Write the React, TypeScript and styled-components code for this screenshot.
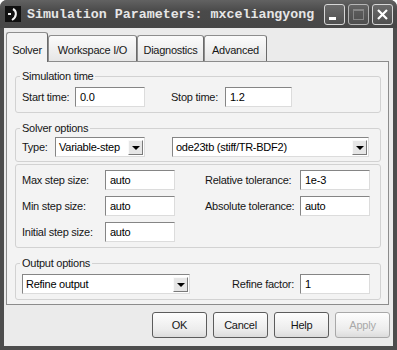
import * as React from "react"
import styled, { createGlobalStyle } from "styled-components"

const Global = createGlobalStyle`
    html, body { margin: 0; padding: 0; background: #ffffff; }
    body { font-family: "Liberation Sans", Arial, sans-serif; font-size: 11px; letter-spacing: -0.25px; color: #161616; }
`

// ---- Janela ----
const Window = styled.div`
    width: 397px; height: 350px; box-sizing: border-box;
    display: flex; flex-direction: column;
    background: #4d4d4d;
    border-radius: 7px 7px 0 0;
    overflow: hidden;
`
const TitleBar = styled.div`
    height: 28px; flex-shrink: 0;
    display: flex; align-items: center; gap: 6px;
    padding: 0 4px 0 5px;
    background: linear-gradient(#626262, #4a4a4a 40%, #474747);
`
const TitleText = styled.div`
    flex: 1;
    font-family: "Liberation Mono", "Courier New", monospace;
    font-weight: bold; font-size: 13.3px; letter-spacing: 0;
    color: #e6e6e6; white-space: nowrap;
`
const CaptionButtons = styled.div` display: flex; gap: 3px; `
const CaptionBtn = styled.div<{ $dim?: boolean }>`
    width: 21px; height: 21px; box-sizing: border-box;
    border: 1px solid #d6d6d6; border-radius: 3px;
    background: linear-gradient(#6a6a6a, #505050);
    display: flex; align-items: center; justify-content: center;
    opacity: ${p => p.$dim ? 0.75 : 1};
`

const Client = styled.div`
    flex: 1; margin: 0 4px 4px;
    background: #ebebeb;
    padding: 0 4px 4px 2px;
    display: flex; flex-direction: column;
`

// ---- Abas ----
const TabStrip = styled.div`
    height: 33px; display: flex; align-items: flex-end;
    position: relative; z-index: 1;
`
const Tab = styled.div<{ $active?: boolean; $w: number }>`
    width: ${p => p.$w}px; box-sizing: border-box;
    height: ${p => p.$active ? 30 : 26}px;
    margin-bottom: ${p => p.$active ? -1 : 0}px;
    padding-top: ${p => p.$active ? 11 : 8}px;
    border: 1px solid #8e8e8e; border-bottom: none;
    border-right-color: #6a6a6a;
    border-radius: 3px 3px 0 0;
    background: ${p => p.$active ? "#f3f3f3" : "linear-gradient(#fbfbfb, #e6e6e6)"};
    text-align: center; line-height: 13px; white-space: nowrap;
`
const Panel = styled.div`
    border: 1px solid #8c8c8c;
    background: #f3f3f3;
    padding: 8px 7px 4px 8px;
    display: flex; flex-direction: column;
`

// ---- Grupos ----
const Group = styled.fieldset<{ $top?: number }>`
    margin: ${p => p.$top || 0}px 0 0 0;
    min-width: 0;
    border: 1px solid #d2d2d2; border-radius: 3px;
    padding: ${p => p.$top === 2 ? 5 : 4}px 6px 5px 6px;
    display: flex; flex-direction: column; gap: 6px;
    &.tight { padding-top: 2px; padding-bottom: 4px; }
    & > legend { padding: 0 2px; margin-left: -2px; line-height: 13px; }
`
const Row = styled.div<{ $cols: string }>`
    display: grid; grid-template-columns: ${p => p.$cols};
    align-items: center; height: 20px;
`
const Label = styled.span<{ $right?: boolean }>`
    white-space: nowrap;
    text-align: ${p => p.$right ? "right" : "left"};
    padding-right: ${p => p.$right ? 6 : 0}px;
`
const Edit = styled.div`
    height: 20px; box-sizing: border-box;
    border: 1px solid; border-color: #858585 #dcdcdc #dcdcdc #858585;
    background: #fff;
    padding: 0 4px; line-height: 18px; white-space: nowrap; color: #000;
`
const Combo = styled.div`
    height: 20px; box-sizing: border-box;
    border: 1px solid; border-color: #858585 #dcdcdc #dcdcdc #858585;
    background: #fff;
    display: flex; align-items: center; padding: 0 1px 0 3px;
    & > span { flex: 1; white-space: nowrap; line-height: 18px; color: #000; }
`
const ComboArrow = styled.div`
    width: 15px; height: 15px; box-sizing: border-box;
    border: 1px solid; border-color: #fafafa #7a7a7a #7a7a7a #fafafa;
    background: #e6e6e6;
    display: flex; align-items: center; justify-content: center;
    &::after { content: ""; border-left: 4px solid transparent; border-right: 4px solid transparent; border-top: 4px solid #000; margin-top: 1px; }
`

// ---- Botões ----
const ButtonBar = styled.div` display: flex; justify-content: flex-end; gap: 6px; margin-top: 7px; margin-right: -1px; `
const Button = styled.div<{ $disabled?: boolean }>`
    width: 55px; height: 26px; box-sizing: border-box;
    border: 1px solid ${p => p.$disabled ? "#a8a8a8" : "#5c5c5c"}; border-radius: 3px;
    background: linear-gradient(#fdfdfd, #ececec 70%, #dcdcdc);
    display: flex; align-items: center; justify-content: center;
    color: ${p => p.$disabled ? "#a9a9a9" : "#161616"};
`

const Combobox = ({ text }: any) => <Combo><span>{text}</span><ComboArrow /></Combo>

const tabs = [
    { name: "Solver", w: 42 },
    { name: "Workspace I/O", w: 89 },
    { name: "Diagnostics", w: 67 },
    { name: "Advanced", w: 63 },
]

export default function App() {
    return <>
        <Global />
        <Window>
            <TitleBar>
                <svg width="16" height="16" viewBox="0 0 16 16">
                    <rect width="16" height="16" fill="#111" />
                    <path d="M8 3 C12 5 12 11 7 14" stroke="#f2f2f2" strokeWidth="2" fill="none" />
                    <rect x="3" y="7" width="3" height="2" fill="#f2f2f2" />
                </svg>
                <TitleText>Simulation Parameters: mxceliangyong</TitleText>
                <CaptionButtons>
                    <CaptionBtn>
                        <svg width="19" height="19" viewBox="0 0 19 19"><rect x="4" y="12" width="7" height="3" fill="#fff" /></svg>
                    </CaptionBtn>
                    <CaptionBtn $dim>
                        <svg width="19" height="19" viewBox="0 0 19 19"><rect x="4.5" y="4.5" width="10" height="10" fill="none" stroke="#9a9a9a" /><rect x="4" y="4" width="11" height="2" fill="#9a9a9a" /></svg>
                    </CaptionBtn>
                    <CaptionBtn>
                        <svg width="19" height="19" viewBox="0 0 19 19"><path d="M5 5 L14 14 M14 5 L5 14" stroke="#fff" strokeWidth="2.2" /></svg>
                    </CaptionBtn>
                </CaptionButtons>
            </TitleBar>
            <Client>
                <TabStrip>
                    { tabs.map((t, i) => <Tab key={t.name} $w={t.w} $active={i === 0}>{t.name}</Tab>) }
                </TabStrip>
                <Panel>
                    <Group>
                        <legend>Simulation time</legend>
                        <Row $cols="53px 70px 26px 54px 67px">
                            <Label>Start time:</Label><Edit>0.0</Edit><span />
                            <Label>Stop time:</Label><Edit>1.2</Edit>
                        </Row>
                    </Group>
                    <Group $top={9} className="tight">
                        <legend>Solver options</legend>
                        <Row $cols="33px 90px 27px 197px">
                            <Label>Type:</Label><Combobox text="Variable-step" /><span />
                            <Combobox text="ode23tb (stiff/TR-BDF2)" />
                        </Row>
                    </Group>
                    <Group $top={2}>
                        <Row $cols="83px 70px 30px 95px 70px">
                            <Label>Max step size:</Label><Edit>auto</Edit><span />
                            <Label>Relative tolerance:</Label><Edit>1e-3</Edit>
                        </Row>
                        <Row $cols="83px 70px 30px 95px 70px">
                            <Label>Min step size:</Label><Edit>auto</Edit><span />
                            <Label>Absolute tolerance:</Label><Edit>auto</Edit>
                        </Row>
                        <Row $cols="83px 70px">
                            <Label>Initial step size:</Label><Edit>auto</Edit>
                        </Row>
                    </Group>
                    <Group $top={9}>
                        <legend>Output options</legend>
                        <Row $cols="168px 110px 70px">
                            <Combobox text="Refine output" />
                            <Label $right>Refine factor:</Label><Edit>1</Edit>
                        </Row>
                    </Group>
                </Panel>
                <ButtonBar>
                    <Button>OK</Button>
                    <Button>Cancel</Button>
                    <Button>Help</Button>
                    <Button $disabled>Apply</Button>
                </ButtonBar>
            </Client>
        </Window>
    </>
}
